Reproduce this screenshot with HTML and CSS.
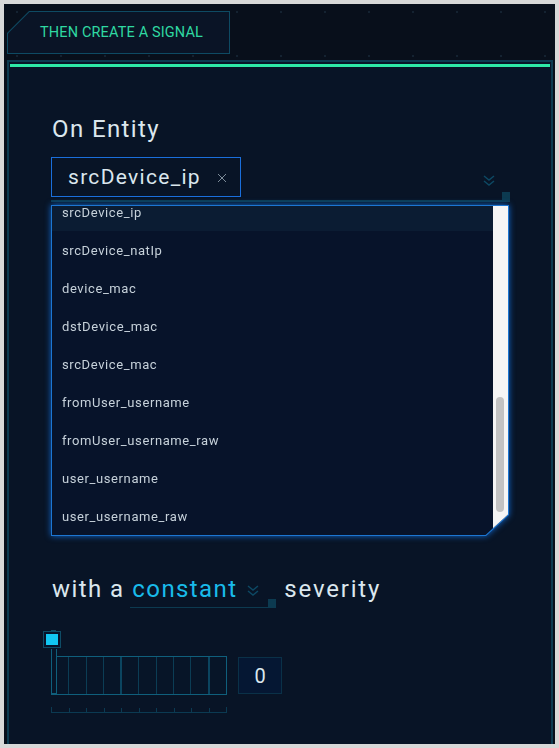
FILE: index.html
```html
<!DOCTYPE html>
<html>
<head>
<meta charset="utf-8">
<link rel="stylesheet" href="styles.css">
</head>
<body>
<div class="frame">
  <div class="header">
    <div class="tab"><div class="tab-inner">THEN CREATE A SIGNAL</div></div>
  </div>
  <div class="panel">
    <div class="green-bar"></div>
    <div class="content">
      <div class="label">On Entity</div>
      <div class="select">
        <div class="select-main">
          <div class="tag-input">
            <span class="tag-text">srcDevice_ip</span>
            <svg class="x-icon" width="10" height="10" viewBox="0 0 10 10"><path d="M1 1L9 9M9 1L1 9" stroke="#7d8c99" stroke-width="1"/></svg>
          </div>
          <svg class="chev" width="12" height="11" viewBox="0 0 12 11"><path d="M1 1L6 5L11 1M1 6L6 10L11 6" fill="none" stroke="#0d4863" stroke-width="1.5"/></svg>
        </div>
        <div class="select-line"><span class="line"></span><span class="sq"></span></div>
      </div>
      <div class="dd-wrap">
        <div class="dd">
          <div class="dd-inner">
            <ul class="dd-list">
              <li class="active">srcDevice_ip</li>
              <li>srcDevice_natIp</li>
              <li>device_mac</li>
              <li>dstDevice_mac</li>
              <li>srcDevice_mac</li>
              <li>fromUser_username</li>
              <li>fromUser_username_raw</li>
              <li>user_username</li>
              <li>user_username_raw</li>
            </ul>
            <div class="scrollbar"><div class="thumb"></div></div>
          </div>
        </div>
      </div>
      <div class="severity">
        <span class="word">with a</span>
        <span class="sev-select">
          <span class="sev-value">constant</span>
          <svg class="chev2" width="12" height="11" viewBox="0 0 12 11"><path d="M1 1L6 5L11 1M1 6L6 10L11 6" fill="none" stroke="#0d4863" stroke-width="1.5"/></svg>
        </span>
        <span class="word">severity</span>
      </div>
      <div class="slider-row">
        <div class="slider">
          <div class="track">
            <span></span><span></span><span></span><span class="thick"></span><span></span><span></span><span></span><span></span><span class="thick"></span><span class="last"></span>
          </div>
          <div class="handle"><span class="handle-fill"></span></div>
          <div class="stem"></div>
          <div class="ruler">
            <span></span><span></span><span></span><span></span><span></span><span></span><span></span><span></span><span></span><span></span>
          </div>
        </div>
        <div class="num">0</div>
      </div>
    </div>
  </div>
</div>
</body>
</html>
```
FILE: styles.css
```css
* { box-sizing: border-box; }
html, body { margin: 0; padding: 0; }
body {
  background: #d8d8d8;
  width: 559px;
  height: 748px;
  overflow: hidden;
  font-family: Roboto, "Liberation Sans", sans-serif;
}
.frame {
  margin: 4px;
  width: 551px;
  height: 740px;
  background-color: #080f1b;
  background-image: radial-gradient(circle, #142231 1.1px, transparent 1.4px);
  background-size: 44px 44px;
  background-position: -9px -14px;
  display: flex;
  flex-direction: column;
  overflow: hidden;
}
.header {
  height: 56px;
  flex: none;
  padding: 7px 0 0 3px;
}
.tab {
  width: 223px;
  height: 43px;
  background: #0e4a63;
  padding: 1px;
  clip-path: polygon(22px 0, 100% 0, 100% 100%, 0 100%, 0 22px);
}
.tab-inner {
  height: 100%;
  background: #0a1426;
  clip-path: polygon(21.5px 0, 100% 0, 100% 100%, 0 100%, 0 21.5px);
  display: flex;
  align-items: center;
  padding-left: 32px;
  color: #2fd9a2;
  font-size: 14.5px;
  letter-spacing: 0.15px;
  font-weight: 400;
}
.panel {
  flex: 1;
  margin: 0 2px 0 3px;
  border: 2px solid #0c3a50;
  border-bottom: none;
  background: #081426;
}
.green-bar {
  height: 3px;
  margin: 2px 1px 0;
  background: #2ee8a6;
}
.content {
  padding-left: 42px;
}
.label {
  margin-top: 48px;
  padding-left: 1px;
  font-size: 24px;
  line-height: 28px;
  color: #dbe7ee;
  letter-spacing: 1.4px;
}
.select {
  margin-top: 14px;
  width: 459px;
}
.select-main {
  height: 40px;
  display: flex;
  align-items: center;
  justify-content: space-between;
}
.tag-input {
  width: 190px;
  height: 40px;
  border: 1px solid #1a6fdc;
  display: flex;
  align-items: center;
  padding-left: 16px;
  color: #dbe7ee;
  font-size: 21px;
  letter-spacing: 1.3px;
}
.x-icon { margin-left: 16px; margin-top: 2px; }
.chev { margin-right: 15px; margin-top: 7px; }
.select-line {
  display: flex;
  align-items: flex-end;
  height: 10px;
  margin-top: -5px;
}
.select-line .line {
  flex: 1;
  height: 2px;
  background: #0c3a50;
}
.select-line .sq {
  width: 8px;
  height: 10px;
  background: #0c3a50;
}
.dd-wrap {
  margin-top: 3px;
  width: 458px;
  filter: drop-shadow(0 0 3px rgba(18, 115, 230, 0.85));
}
.dd {
  background: #1c76d2;
  padding: 1px;
  clip-path: polygon(0 0, 100% 0, 100% calc(100% - 21px), calc(100% - 23px) 100%, 0 100%);
}
.dd-inner {
  height: 329px;
  display: flex;
  background: #07132a;
  clip-path: polygon(0 0, 100% 0, 100% calc(100% - 20.5px), calc(100% - 22.5px) 100%, 0 100%);
}
.dd-list {
  list-style: none;
  margin: -13px 0 0;
  padding: 0;
  flex: 1;
  overflow: hidden;
}
.dd-list li {
  height: 38px;
  display: flex;
  align-items: center;
  padding-left: 10px;
  font-size: 13px;
  letter-spacing: 0.6px;
  color: #c6d1da;
}
.dd-list li.active { background: #0b1c33; }
.scrollbar {
  width: 15px;
  background: #f5f5f5;
  padding: 191px 4px 0 3px;
}
.thumb {
  width: 8px;
  height: 115px;
  border-radius: 4px;
  background: #c2c2c2;
}
.severity {
  margin-top: 39px;
  display: flex;
  align-items: baseline;
  font-size: 24px;
  line-height: 28px;
  color: #dbe7ee;
  letter-spacing: 1.4px;
  padding-left: 1px;
}
.sev-select {
  position: relative;
  margin-left: 6px;
  width: 146px;
  display: inline-flex;
  align-items: center;
  padding-left: 2px;
  border-bottom: 1px solid #0c3a50;
  padding-bottom: 4px;
}
.sev-select::after {
  content: "";
  position: absolute;
  right: 0;
  bottom: -1px;
  width: 8px;
  height: 9px;
  background: #0c3a50;
}
.sev-value { color: #19bbea; }
.chev2 { margin-left: 10px; margin-top: 2px; }
.severity .word:last-child { margin-left: 8px; letter-spacing: 1.8px; }
.slider-row {
  margin-top: 48px;
  display: flex;
  align-items: flex-start;
}
.slider {
  position: relative;
  width: 176px;
}
.track {
  height: 39px;
  border: 1px solid #0f5f7c;
  display: flex;
  background: #071528;
}
.track span {
  flex: 1;
  border-right: 1px solid #0b3d55;
}
.track span.thick { border-right: 2px solid #0b4560; }
.track span.last { border-right: none; }
.handle {
  position: absolute;
  left: -8px;
  top: -25px;
  width: 18px;
  height: 17px;
  border: 1px solid #0e4c66;
  background: #07132a;
  padding: 2px;
}
.handle::before {
  content: "";
  position: absolute;
  left: 7px;
  top: -2px;
  width: 5px;
  height: 2px;
  background: #0e4c66;
}
.handle-fill {
  display: block;
  width: 12px;
  height: 11px;
  background: #12c6f2;
}
.stem {
  position: absolute;
  left: 0;
  top: -7px;
  width: 6px;
  height: 45px;
  border: 1px solid #0f5f7c;
  border-top: none;
  background: #071528;
}
.ruler {
  margin-top: 12px;
  height: 6px;
  display: flex;
  align-items: flex-end;
  border-left: 1px solid #0b3a52;
  border-right: 1px solid #0b3a52;
  border-bottom: 1px solid #0b3a52;
}
.ruler span {
  flex: 1;
  height: 4px;
  border-left: 1px solid #0b3a52;
}
.ruler span:first-child { border-left: none; }
.num {
  margin-left: 11px;
  margin-top: 1px;
  width: 44px;
  height: 37px;
  background: #051733;
  border: 1px solid #0a3148;
  display: flex;
  align-items: center;
  justify-content: center;
  color: #dbe7ee;
  font-size: 20px;
}
```
